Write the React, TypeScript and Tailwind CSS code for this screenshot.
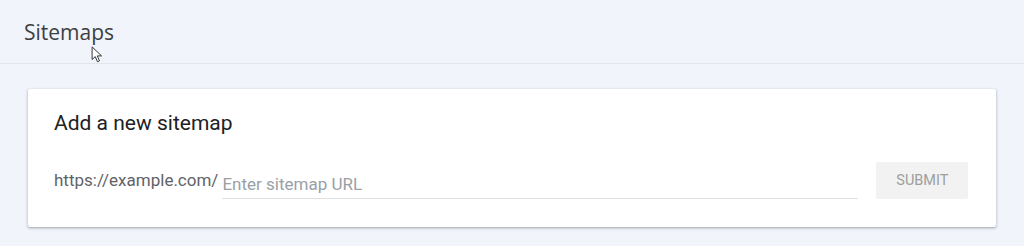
const Cursor = () => (
  <svg width="13" height="18" viewBox="0 0 14 20" className="absolute left-[91px] top-[46px]">
    <path d="M1 1 L1 15 L4.5 11.8 L7 17.5 L9.2 16.5 L6.8 11 L11.5 11 Z" fill="#fff" stroke="#222" strokeWidth="1" strokeLinejoin="round" />
  </svg>
);

export default function App() {
  return (
    <div className="relative w-[1024px] h-[246px] bg-[#f1f4fb] overflow-hidden font-['Roboto','Liberation_Sans',sans-serif]">
      {/* header */}
      <div className="h-[64px] border-b border-[#e1e4ea] px-[24px] flex items-center">
        <h1 className="text-[21px] leading-none text-[#3c4043] font-['Open_Sans','Roboto',sans-serif] mt-[2px]">Sitemaps</h1>
      </div>
      <Cursor />

      <div className="px-[28px] pt-[25px]">
        <div className="bg-white rounded-[2px] shadow-[0_1px_2px_rgba(60,64,67,0.3),0_1px_3px_1px_rgba(60,64,67,0.12)] h-[138px] pl-[26px] pr-[27px] pt-[20px]">
          <h2 className="text-[21px] leading-[28px] text-[#202124]">Add a new sitemap</h2>
          <div className="flex items-center mt-[25px]">
            <span className="text-[17px] text-[#5f6368] whitespace-nowrap">https://example.com/</span>
            <div className="ml-[4px] w-[636px] h-[36px] flex items-end border-b border-[#e0e0e0]">
              <input
                className="w-full text-[17px] leading-[20px] pb-[4px] text-[#202124] placeholder:text-[#9aa0a6] outline-none bg-transparent"
                placeholder="Enter sitemap URL"
              />
            </div>
            <button className="ml-[18px] w-[92px] h-[37px] bg-[#f2f2f2] text-[14.5px] text-[#9e9e9e] uppercase rounded-[2px]">
              Submit
            </button>
          </div>
        </div>
      </div>
    </div>
  );
}
